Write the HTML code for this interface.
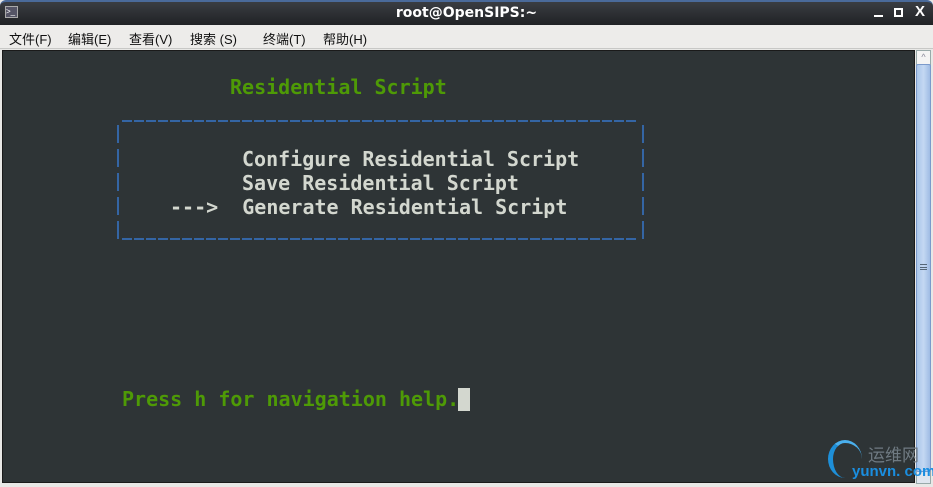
<!DOCTYPE html>
<html><head><meta charset="utf-8"><style>
*{margin:0;padding:0;box-sizing:border-box}
body{width:933px;height:487px;overflow:hidden;background:#e8e8e6;position:relative;font-family:"Liberation Sans","Noto Sans CJK SC",sans-serif}
.title{position:absolute;left:0;top:0;width:933px;height:25px;background:linear-gradient(#3a3d42,#202225);border-top:2px solid #4a6a9a;border-radius:6px 6px 0 0}
.title .t{position:absolute;left:0;right:0;top:3px;text-align:center;color:#fff;font-weight:bold;font-size:14px;font-family:"DejaVu Sans",sans-serif}
.menu{position:absolute;left:0;top:25px;width:933px;height:24px;background:#edecea;border-bottom:1px solid #c8c8c6}
.menu span{position:absolute;top:4px;font-size:13px;color:#111}
.term{position:absolute;left:2px;top:50px;width:913px;height:433px;background:#2e3436;border:1px solid #1a1a1a}
.m{position:absolute;font-family:"DejaVu Sans Mono","Liberation Mono",monospace;font-weight:bold;font-size:20px;line-height:24px;white-space:pre;color:#d3d7cf}
.g{color:#4e9a06}
.hl{position:absolute;left:122px;width:516px;height:2px;background:repeating-linear-gradient(90deg,#3465a4 0 10px,transparent 10px 12px)}
.sb{position:absolute;left:916px;top:50px;width:15px;height:434px;background:#dfe6ef;border:1px solid #9aa}
.thumb{position:absolute;left:916px;top:64px;width:15px;height:408px;background:linear-gradient(90deg,#aac6ea,#c4d8f2,#9fbce4);border:1px solid #7b9acb;border-radius:2px}
</style></head><body>
<div class="title"><div style="position:absolute;left:5px;top:4px;width:13px;height:12px;background:#556;border:1px solid #aaa;color:#fff;font-size:8px;line-height:9px">&gt;_</div><div class="t">root@OpenSIPS:~</div>
<div style="position:absolute;right:50px;top:13px;width:9px;height:2px;background:#fff"></div>
<div style="position:absolute;right:30px;top:6px;width:9px;height:9px;border:2px solid #fff"></div>
<div style="position:absolute;right:8px;top:1px;color:#fff;font-size:15px;font-weight:bold">X</div></div>
<div class="menu">
<span style="left:9px">文件(F)</span><span style="left:68px">编辑(E)</span><span style="left:129px">查看(V)</span><span style="left:190px">搜索 (S)</span><span style="left:263px">终端(T)</span><span style="left:323px">帮助(H)</span>
</div>
<div class="term"></div>
<div class="sb"></div>
<div style="position:absolute;left:917px;top:51px;width:13px;height:13px;background:#f4f4f4;color:#889;font-size:9px;text-align:center;line-height:13px">^</div>
<div class="thumb"></div>
<div style="position:absolute;left:920px;top:264px;width:7px;height:6px;border-top:1px solid #567;border-bottom:1px solid #567"></div>
<div style="position:absolute;left:920px;top:267px;width:7px;height:1px;background:#567"></div>
<div class="m g" style="left:230px;top:75px">Residential Script</div>
<div class="hl" style="top:120px"></div>
<div class="hl" style="top:238px"></div>
<div style="position:absolute;left:117px;top:125px;width:2px;height:117px;background:repeating-linear-gradient(#3465a4 0 18px,transparent 18px 24px)"></div>
<div style="position:absolute;left:642px;top:125px;width:2px;height:117px;background:repeating-linear-gradient(#3465a4 0 18px,transparent 18px 24px)"></div>
<div class="m" style="left:242px;top:147px">Configure Residential Script</div>
<div class="m" style="left:242px;top:171px">Save Residential Script</div>
<div class="m" style="left:170px;top:195px">--->  Generate Residential Script</div>
<div class="m g" style="left:122px;top:387px">Press h for navigation help.</div>
<div style="position:absolute;left:458px;top:388px;width:12px;height:23px;background:#d3d7cf"></div>
<div style="position:absolute;left:828px;top:440px;width:34px;height:38px;border-radius:50%;border-left:5px solid #1e8fd8;border-top:3px solid #4ab0ee"></div>
<div style="position:absolute;left:868px;top:441px;font-size:17px;color:#6f7a82;white-space:nowrap">运维网</div>
<div style="position:absolute;left:852px;top:463px;font-size:15px;font-weight:bold;color:#1a8ee0;white-space:nowrap;font-family:'Liberation Sans',sans-serif">yunvn. com</div>
</body></html>
